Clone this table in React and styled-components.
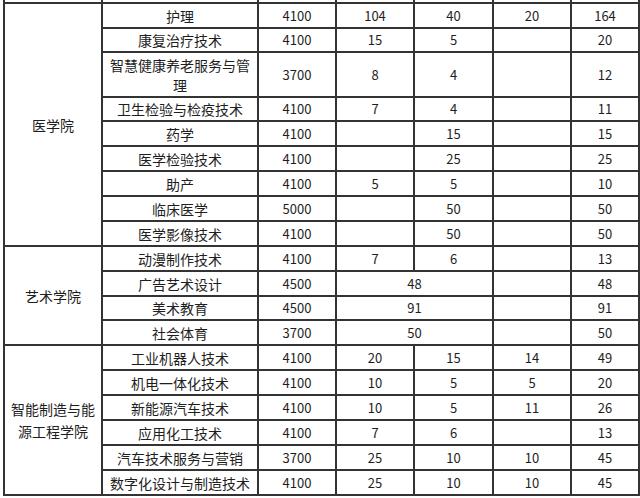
import React from 'react';
import styled, { createGlobalStyle } from 'styled-components';

const GlobalStyle = createGlobalStyle`
  html, body {
    margin: 0;
    padding: 0;
    background: #fff;
  }
  body {
    font-family: "Noto Sans CJK SC", "Noto Sans", sans-serif;
    color: #1e1e1e;
  }
`;

// 표 전체
const Table = styled.table`
  margin-left: 3px;
  border-collapse: collapse;
  table-layout: fixed;
  width: 635px;
`;

const StubRow = styled.tr`
  height: 3px;
`;

const StubCell = styled.td`
  padding: 0;
  border-left: 2px solid #333;
  border-right: 2px solid #333;
  border-bottom: 2px solid #333;
`;

const Row = styled.tr`
  height: ${({ $h }) => $h}px;
`;

const Cell = styled.td`
  padding: 0 6px;
  border: 2px solid #333;
  text-align: center;
  vertical-align: middle;
  font-size: 14px;
  line-height: 20px;
  white-space: normal;
  word-break: break-all;
`;

const CollegeCell = styled(Cell)`
  line-height: 22px;
`;

const NumCell = styled(Cell)`
  padding: 0;
  font-size: 13px;
  font-family: "Noto Sans CJK SC", "DejaVu Sans", sans-serif;
`;

const colWidths = [98, 156, 78, 78, 79, 78, 68];

// [학원, 전공, 학비, a, b, c, 합계, 높이, 병합(a+b)]
const rows = [
  { major: '护理', fee: '4100', a: '104', b: '40', c: '20', total: '164', h: 25 },
  { major: '康复治疗技术', fee: '4100', a: '15', b: '5', c: '', total: '20', h: 24 },
  { major: '智慧健康养老服务与管理', fee: '3700', a: '8', b: '4', c: '', total: '12', h: 45 },
  { major: '卫生检验与检疫技术', fee: '4100', a: '7', b: '4', c: '', total: '11', h: 24 },
  { major: '药学', fee: '4100', a: '', b: '15', c: '', total: '15', h: 25 },
  { major: '医学检验技术', fee: '4100', a: '', b: '25', c: '', total: '25', h: 25 },
  { major: '助产', fee: '4100', a: '5', b: '5', c: '', total: '10', h: 25 },
  { major: '临床医学', fee: '5000', a: '', b: '50', c: '', total: '50', h: 25 },
  { major: '医学影像技术', fee: '4100', a: '', b: '50', c: '', total: '50', h: 25 },
  { major: '动漫制作技术', fee: '4100', a: '7', b: '6', c: '', total: '13', h: 25 },
  { major: '广告艺术设计', fee: '4500', merged: '48', c: '', total: '48', h: 25 },
  { major: '美术教育', fee: '4500', merged: '91', c: '', total: '91', h: 24 },
  { major: '社会体育', fee: '3700', merged: '50', c: '', total: '50', h: 25 },
  { major: '工业机器人技术', fee: '4100', a: '20', b: '15', c: '14', total: '49', h: 25 },
  { major: '机电一体化技术', fee: '4100', a: '10', b: '5', c: '5', total: '20', h: 25 },
  { major: '新能源汽车技术', fee: '4100', a: '10', b: '5', c: '11', total: '26', h: 25 },
  { major: '应用化工技术', fee: '4100', a: '7', b: '6', c: '', total: '13', h: 25 },
  { major: '汽车技术服务与营销', fee: '3700', a: '25', b: '10', c: '10', total: '45', h: 25 },
  { major: '数字化设计与制造技术', fee: '4100', a: '25', b: '10', c: '10', total: '45', h: 25 },
];

// 학원 병합 시작 위치
const colleges = {
  0: { name: '医学院', span: 9 },
  9: { name: '艺术学院', span: 4 },
  13: { name: '智能制造与能源工程学院', span: 6 },
};

const App = () => {
  return (
    <>
      <GlobalStyle />
      <Table>
        <colgroup>
          {colWidths.map((w, i) => (
            <col key={i} style={{ width: w }} />
          ))}
        </colgroup>
        <tbody>
          <StubRow>
            {colWidths.map((_, i) => (
              <StubCell key={i} />
            ))}
          </StubRow>
          {rows.map((r, i) => (
            <Row key={r.major} $h={r.h}>
              {colleges[i] && (
                <CollegeCell rowSpan={colleges[i].span}>{colleges[i].name}</CollegeCell>
              )}
              <Cell>{r.major}</Cell>
              <NumCell>{r.fee}</NumCell>
              {r.merged ? (
                <NumCell colSpan={2}>{r.merged}</NumCell>
              ) : (
                <>
                  <NumCell>{r.a}</NumCell>
                  <NumCell>{r.b}</NumCell>
                </>
              )}
              <NumCell>{r.c}</NumCell>
              <NumCell>{r.total}</NumCell>
            </Row>
          ))}
        </tbody>
      </Table>
    </>
  );
};

export default App;
